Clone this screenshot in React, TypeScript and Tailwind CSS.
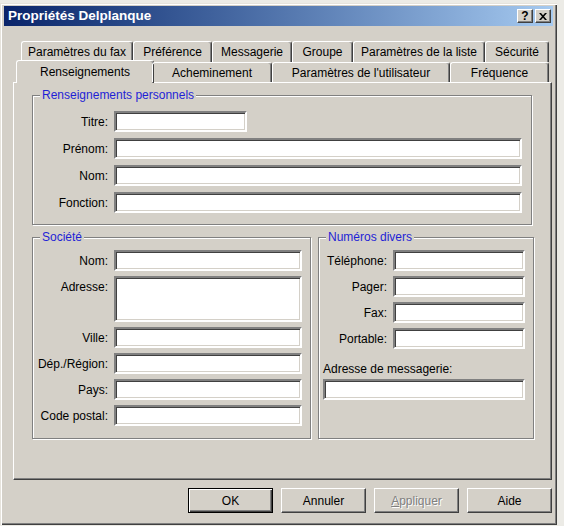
import React from "react";

const inputBase =
  "bg-white border-2 border-t-[#808080] border-l-[#808080] border-r-white border-b-white shadow-[inset_1px_1px_#404040,inset_-1px_-1px_#d4d0c8]";

function Field({
  label,
  labelW,
  inputW,
  tall,
}: {
  label: string;
  labelW: string;
  inputW: string;
  tall?: boolean;
}) {
  return (
    <div className="flex items-start gap-[6px]">
      <div className={`${labelW} h-[21px] flex items-center justify-end whitespace-nowrap leading-none`}>
        {label}
      </div>
      <div className={`${inputW} ${tall ? "h-[46px]" : "h-[21px]"} ${inputBase}`} />
    </div>
  );
}

function Group({
  title,
  className,
  children,
}: {
  title: string;
  className: string;
  children: React.ReactNode;
}) {
  return (
    <div
      className={`relative border border-[#808080] shadow-[inset_1px_1px_#ffffff,1px_1px_#ffffff] ${className}`}
    >
      <div className="absolute -top-[8px] left-[7px] px-[2px] bg-[#d4d0c8] text-[#1f1fd6] leading-[14px] whitespace-nowrap">
        {title}
      </div>
      {children}
    </div>
  );
}

function Tab({ w, label, h }: { w: string; label: string; h: string }) {
  return (
    <div
      className={`${w} ${h} shrink-0 flex items-center justify-center whitespace-nowrap leading-none border-l border-t border-r border-l-white border-t-white border-r-[#404040] rounded-tl-[3px] rounded-tr-[3px] shadow-[inset_-1px_0_#808080]`}
    >
      {label}
    </div>
  );
}

function Btn({
  children,
  def,
}: {
  children: React.ReactNode;
  def?: boolean;
}) {
  return (
    <div
      className={
        def
          ? "w-[85px] h-[25px] flex items-center justify-center leading-none border border-black shadow-[inset_1px_1px_#ffffff,inset_-1px_-1px_#404040,inset_-2px_-2px_#808080]"
          : "w-[85px] h-[25px] flex items-center justify-center leading-none border border-t-white border-l-white border-r-[#404040] border-b-[#404040] shadow-[inset_-1px_-1px_#808080]"
      }
    >
      {children}
    </div>
  );
}

export default function App() {
  return (
    <div className="w-[564px] h-[526px] bg-[#ecebe6] overflow-hidden font-['Liberation_Sans',Arial,sans-serif] text-[12px] text-black">
      <div className="mt-[3px] w-[557px] h-[522px] bg-[#d4d0c8] pt-[3px] px-[4px] flex flex-col shadow-[inset_1px_1px_#e6e3dc,inset_2px_2px_#ffffff,inset_-1px_-1px_#404040,inset_-2px_-2px_#808080]">
        {/* Title bar */}
        <div className="h-[20px] flex items-center bg-gradient-to-r from-[#0a246a] to-[#a6caf0] pl-[4px] pr-[2px]">
          <div className="flex-1 text-white font-bold text-[13.5px] leading-none whitespace-nowrap">
            Propriétés Delplanque
          </div>
          <div className="flex gap-[2px]">
            <div className="w-[16px] h-[14px] bg-[#d4d0c8] flex items-center justify-center border border-t-white border-l-white border-r-[#404040] border-b-[#404040] shadow-[inset_-1px_-1px_#808080] font-bold text-[12px] leading-none">
              ?
            </div>
            <div className="w-[16px] h-[14px] bg-[#d4d0c8] flex items-center justify-center border border-t-white border-l-white border-r-[#404040] border-b-[#404040] shadow-[inset_-1px_-1px_#808080]">
              <svg width="8" height="7" viewBox="0 0 8 7">
                <path d="M0 0h2l2 2.2L6 0h2L5 3.5 8 7H6L4 4.8 2 7H0l3-3.5z" fill="#000" />
              </svg>
            </div>
          </div>
        </div>

        {/* Tab control */}
        <div className="ml-[9px] w-[539px] mt-[15px] flex flex-col">
          <div className="flex pl-[8px] h-[21px]">
            <Tab w="w-[112px]" h="h-[21px]" label="Paramètres du fax" />
            <Tab w="w-[79px]" h="h-[21px]" label="Préférence" />
            <Tab w="w-[80px]" h="h-[21px]" label="Messagerie" />
            <Tab w="w-[61px]" h="h-[21px]" label="Groupe" />
            <Tab w="w-[132px]" h="h-[21px]" label="Paramètres de la liste" />
            <Tab w="w-[64px]" h="h-[21px]" label="Sécurité" />
          </div>
          <div className="relative z-10 flex items-end pl-[5px] h-[20px]">
            <div className="-mx-[2px] -mb-[1px] w-[138px] h-[23px] shrink-0 bg-[#d4d0c8] flex items-center justify-center whitespace-nowrap leading-none border-l border-t border-r border-l-white border-t-white border-r-[#404040] rounded-tl-[3px] rounded-tr-[3px] shadow-[inset_-1px_0_#808080]">
              Renseignements
            </div>
            <Tab w="w-[120px]" h="h-[20px]" label="Acheminement" />
            <Tab w="w-[178px]" h="h-[20px]" label="Paramètres de l'utilisateur" />
            <Tab w="w-[99px]" h="h-[20px]" label="Fréquence" />
          </div>

          {/* Panel */}
          <div className="h-[398px] border border-t-white border-l-white border-r-[#404040] border-b-[#404040] shadow-[inset_-1px_-1px_#808080] pt-[12px] pl-[18px] flex flex-col">
            <Group title="Renseignements personnels" className="w-[500px] pt-[15px] pb-[11px]">
              <div className="flex flex-col gap-[6px]">
                <Field label="Titre:" labelW="w-[75px]" inputW="w-[133px]" />
                <Field label="Prénom:" labelW="w-[75px]" inputW="w-[408px]" />
                <Field label="Nom:" labelW="w-[75px]" inputW="w-[408px]" />
                <Field label="Fonction:" labelW="w-[75px]" inputW="w-[408px]" />
              </div>
            </Group>

            <div className="flex gap-[7px] mt-[12px]">
              <Group title="Société" className="w-[279px] h-[202px] pt-[12px]">
                <div className="flex flex-col gap-[5px]">
                  <Field label="Nom:" labelW="w-[75px]" inputW="w-[188px]" />
                  <Field label="Adresse:" labelW="w-[75px]" inputW="w-[188px]" tall />
                  <Field label="Ville:" labelW="w-[75px]" inputW="w-[188px]" />
                  <Field label="Dép./Région:" labelW="w-[75px]" inputW="w-[188px]" />
                  <Field label="Pays:" labelW="w-[75px]" inputW="w-[188px]" />
                  <Field label="Code postal:" labelW="w-[75px]" inputW="w-[188px]" />
                </div>
              </Group>

              <Group title="Numéros divers" className="w-[216px] h-[202px] pt-[12px]">
                <div className="flex flex-col gap-[5px]">
                  <Field label="Téléphone:" labelW="w-[68px]" inputW="w-[132px]" />
                  <Field label="Pager:" labelW="w-[68px]" inputW="w-[132px]" />
                  <Field label="Fax:" labelW="w-[68px]" inputW="w-[132px]" />
                  <Field label="Portable:" labelW="w-[68px]" inputW="w-[132px]" />
                </div>
                <div className="pl-[4px] mt-[13px] leading-[14px] whitespace-nowrap">
                  Adresse de messagerie:
                </div>
                <div className={`ml-[4px] mt-[3px] w-[202px] h-[21px] ${inputBase}`} />
              </Group>
            </div>
          </div>

          {/* Buttons */}
          <div className="flex justify-end gap-[8px] mt-[8px]">
            <Btn def>OK</Btn>
            <Btn>Annuler</Btn>
            <Btn>
              <span className="text-[#808080] [text-shadow:1px_1px_#ffffff]">
                <span className="underline">A</span>ppliquer
              </span>
            </Btn>
            <Btn>Aide</Btn>
          </div>
        </div>
      </div>
    </div>
  );
}
